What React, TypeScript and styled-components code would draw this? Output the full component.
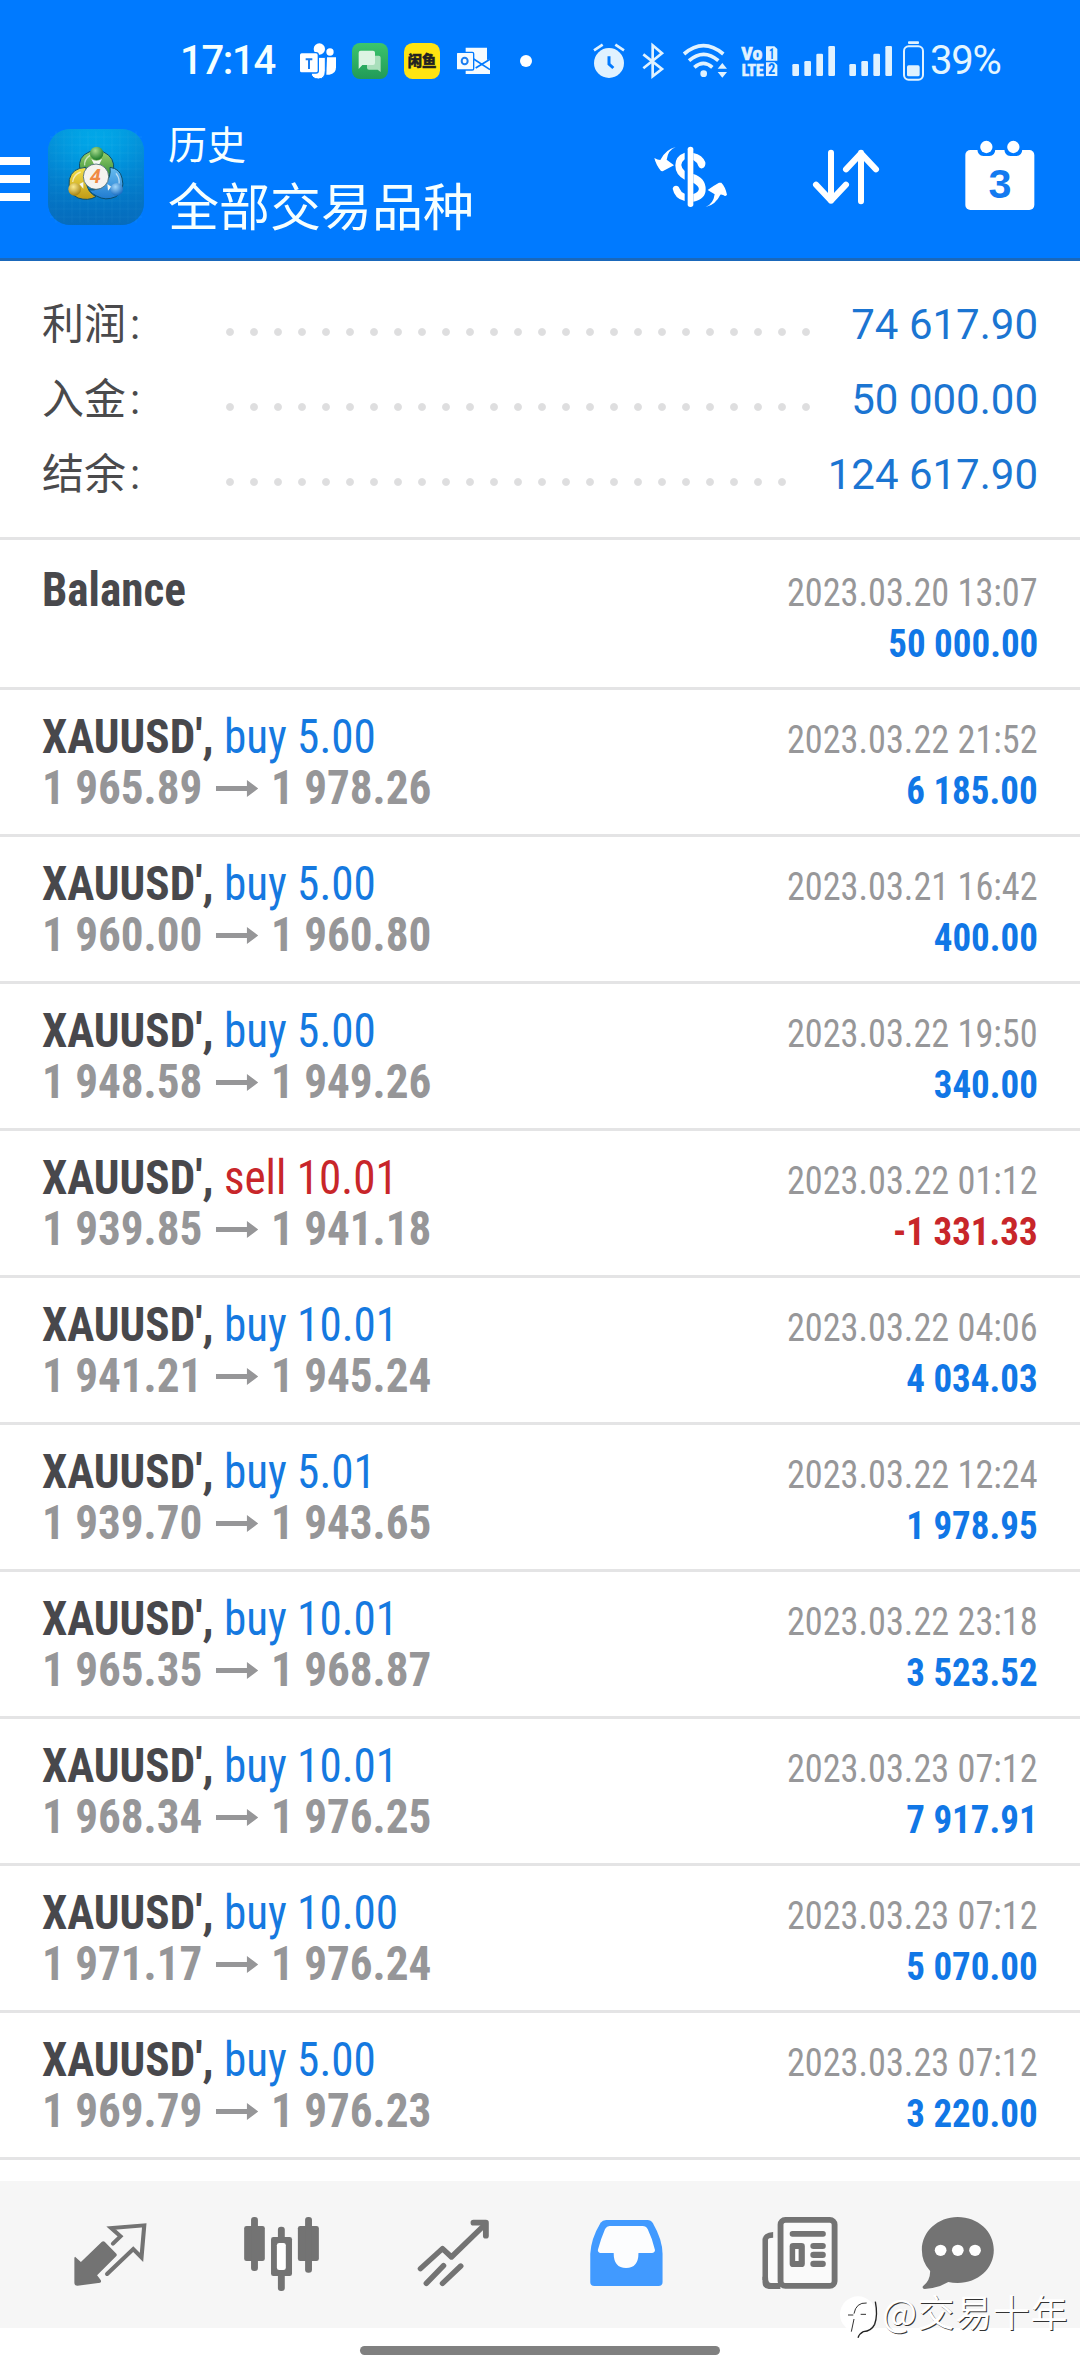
import React from "react";
import styled, { createGlobalStyle } from "styled-components";

const GlobalStyle = createGlobalStyle`
  * { box-sizing: border-box; }
  body { margin: 0; background: #fff; }
`;

const uiFont = `Roboto, "Noto Sans CJK SC", sans-serif`;
const condensedFont = `"Roboto Condensed", Roboto, "Noto Sans CJK SC", sans-serif`;

const Screen = styled.div`
  position: relative;
  width: 1080px;
  height: 2376px;
  display: flex;
  flex-direction: column;
  overflow: hidden;
  background: #fff;
  font-family: ${uiFont};
`;

const TopArea = styled.header`
  height: 261px;
  background: #007aff;
  border-bottom: 3px solid #1a68bb;
`;

const StatusBar = styled.div`
  height: 122px;
  display: flex;
  align-items: center;
  padding-left: 180px;
  color: #e4f6ff;
`;

const Clock = styled.div`
  flex: none;
  width: 120px;
  font-size: 40px;
  line-height: 46px;
  font-weight: 500;
  letter-spacing: -1.3px;
  color: #f4ffff;
`;

const Notifications = styled.div`
  flex: none;
  display: flex;
  align-items: center;
  gap: 16px;
`;

const MoreDot = styled.span`
  width: 12px;
  height: 12px;
  margin-left: 12px;
  border-radius: 50%;
  background: #fff;
`;

const SystemIcons = styled.div`
  flex: none;
  display: flex;
  align-items: center;
  margin-left: 61px;
`;

const StatusIcon = styled.svg<{ $w: number; $gap?: number }>`
  display: block;
  flex: none;
  width: ${(p) => p.$w}px;
  height: 40px;
  margin-left: ${(p) => p.$gap ?? 0}px;
`;

const NoteIcon = styled.svg`
  display: block;
  width: 36px;
  height: 36px;
`;

const BatteryText = styled.div`
  margin-left: 6px;
  font-size: 40px;
  line-height: 46px;
  letter-spacing: -1.2px;
  white-space: nowrap;
`;

const AppBar = styled.div`
  height: 136px;
  display: flex;
  align-items: flex-start;
`;

const MenuButton = styled.div`
  width: 30px;
  margin-top: 35px;
  display: flex;
  flex-direction: column;
  gap: 10px;
`;

const MenuLine = styled.span`
  height: 8px;
  background: #fff;
`;

const AppIcon = styled.svg`
  width: 96px;
  height: 96px;
  margin: 7px 0 0 18px;
`;

const Titles = styled.div`
  width: 486px;
  margin: -3px 0 0 24px;
  color: #f6ffff;
  font-family: "Noto Sans CJK SC", sans-serif;
`;

const Subtitle = styled.div`
  font-size: 39px;
  line-height: 46px;
`;

const Title = styled.div`
  font-size: 51px;
  line-height: 60px;
  margin-top: 9px;
`;

const ActionIcon = styled.svg<{ $w: number; $gap?: number }>`
  flex: none;
  width: ${(p) => p.$w}px;
  height: 72px;
  margin: 18px 0 0 ${(p) => p.$gap ?? 0}px;
`;

const Summary = styled.section`
  height: 279px;
  padding: 26px 42px 0 42px;
  border-bottom: 3px solid #e4e4e5;
`;

const SummaryRow = styled.div`
  height: 75px;
  display: flex;
  align-items: center;
`;

const SummaryLabel = styled.div`
  width: 176px;
  font-size: 42px;
  line-height: 60px;
  color: #4a4a4c;
`;

const Colon = styled.span`
  margin-left: 4px;
`;

const Leader = styled.div<{ $dots: number }>`
  width: ${(p) => p.$dots * 24}px;
  height: 24px;
  margin-top: 15px;
  background-image: radial-gradient(circle at center, #dededf 3.4px, rgba(222, 222, 223, 0) 4.4px);
  background-size: 24px 24px;
`;

const SummaryValue = styled.div`
  margin-left: auto;
  font-size: 42px;
  line-height: 60px;
  color: #1b75d2;
`;

const DealRow = styled.div<{ $tall?: boolean }>`
  height: ${(p) => (p.$tall ? 150 : 147)}px;
  padding: ${(p) => (p.$tall ? 24 : 21)}px 42px 0 42px;
  display: flex;
  justify-content: space-between;
  border-bottom: 3px solid #e4e4e5;
  font-family: ${condensedFont};
`;

const DealLeft = styled.div`
  display: flex;
  flex-direction: column;
  transform: scaleX(0.94);
  transform-origin: left center;
`;

const DealRight = styled.div`
  display: flex;
  flex-direction: column;
  align-items: flex-end;
  padding-top: 4px;
`;

const Instrument = styled.div`
  font-size: 48px;
  line-height: 51px;
  white-space: pre;
  color: #48484c;
`;

const Symbol = styled.b`
  font-weight: 700;
`;

const Side = styled.span<{ $sell?: boolean }>`
  color: ${(p) => (p.$sell ? "#c8262a" : "#1579e0")};
`;

const Prices = styled.div`
  display: flex;
  align-items: center;
  font-size: 48px;
  line-height: 51px;
  font-weight: 700;
  color: #969698;
`;

const Arrow = styled.svg`
  width: 45px;
  height: 17px;
  margin: 2px 14px 0 14px;
`;

const Time = styled.div`
  font-size: 39px;
  line-height: 51px;
  color: #979799;
  transform: scaleX(0.93);
  transform-origin: right center;
`;

const Profit = styled.div<{ $loss?: boolean }>`
  font-size: 39px;
  line-height: 51px;
  font-weight: 700;
  color: ${(p) => (p.$loss ? "#c8262a" : "#1177e6")};
  transform: scaleX(0.948);
  transform-origin: right center;
`;

const Nav = styled.nav`
  height: 147px;
  margin-top: 21px;
  padding-left: 24px;
  display: grid;
  grid-template-columns: 172px 170px 174px 172px 176px 140px;
  place-items: center;
  background: #f6f6f6;
`;

const NavIcon = styled.svg`
  display: block;
  width: 84px;
  height: 83px;
`;

const HomeBar = styled.div`
  width: 360px;
  height: 9px;
  margin: 18px auto 0;
  border-radius: 5px;
  background: #808080;
`;

const Watermark = styled.div`
  position: absolute;
  left: 838px;
  top: 2287px;
  display: flex;
  align-items: center;
  font-family: "Noto Sans CJK SC", sans-serif;
  font-size: 37px;
  line-height: 48px;
  letter-spacing: 0.6px;
  color: #fff;
  text-shadow: 1px 1px 0 #333;
`;

const WatermarkLogo = styled.svg`
  width: 44px;
  height: 48px;
  overflow: visible;
`;

type Deal = { side: "buy" | "sell"; lots: string; open: string; close: string; time: string; profit: string };

const summary = [
  { label: "利润", dots: 25, value: "74 617.90" },
  { label: "入金", dots: 25, value: "50 000.00" },
  { label: "结余", dots: 24, value: "124 617.90" },
];

const deals: Deal[] = [
  { side: "buy", lots: "5.00", open: "1 965.89", close: "1 978.26", time: "2023.03.22 21:52", profit: "6 185.00" },
  { side: "buy", lots: "5.00", open: "1 960.00", close: "1 960.80", time: "2023.03.21 16:42", profit: "400.00" },
  { side: "buy", lots: "5.00", open: "1 948.58", close: "1 949.26", time: "2023.03.22 19:50", profit: "340.00" },
  { side: "sell", lots: "10.01", open: "1 939.85", close: "1 941.18", time: "2023.03.22 01:12", profit: "-1 331.33" },
  { side: "buy", lots: "10.01", open: "1 941.21", close: "1 945.24", time: "2023.03.22 04:06", profit: "4 034.03" },
  { side: "buy", lots: "5.01", open: "1 939.70", close: "1 943.65", time: "2023.03.22 12:24", profit: "1 978.95" },
  { side: "buy", lots: "10.01", open: "1 965.35", close: "1 968.87", time: "2023.03.22 23:18", profit: "3 523.52" },
  { side: "buy", lots: "10.01", open: "1 968.34", close: "1 976.25", time: "2023.03.23 07:12", profit: "7 917.91" },
  { side: "buy", lots: "10.00", open: "1 971.17", close: "1 976.24", time: "2023.03.23 07:12", profit: "5 070.00" },
  { side: "buy", lots: "5.00", open: "1 969.79", close: "1 976.23", time: "2023.03.23 07:12", profit: "3 220.00" },
];

const ICON = "#e0f2ff";

function StatusLine() {
  return (
    <StatusBar>
      <Clock>17:14</Clock>
      <Notifications>
        <NoteIcon viewBox="419 70 108 108" fill="#fff">
          <circle cx="509" cy="97" r="11" />
          <path d="M500 113h27v30q0 20-20 22h-9z" />
          <circle cx="477" cy="88" r="17" />
          <path d="M452 113h43v40q0 25-21 25t-22-20z" stroke="#007aff" strokeWidth="3" />
          <rect x="417" y="99" width="57" height="61" rx="7" stroke="#007aff" strokeWidth="4" />
          <path d="M436 116h20v6h-7v26h-6v-26h-7z" fill="#1a7df0" />
        </NoteIcon>
        <NoteIcon viewBox="577 70 108 108">
          <defs>
            <linearGradient id="msg" x1="0" y1="0" x2="0" y2="1">
              <stop offset="0" stopColor="#3cc56c" />
              <stop offset="1" stopColor="#219a58" />
            </linearGradient>
          </defs>
          <rect x="577" y="70" width="108" height="108" rx="24" fill="url(#msg)" />
          <path d="M622 108h35q6 0 6 6v43l-9-7h-26q-6 0-6-6z" fill="#a9dfbb" />
          <path d="M603 93h37q6 0 6 6v31q0 6-6 6h-32l-11 12V99q0-6 6-6z" fill="#dcf4e3" />
        </NoteIcon>
        <NoteIcon viewBox="732 70 108 108">
          <rect x="732" y="70" width="108" height="108" rx="26" fill="#ffe411" />
          <text x="786" y="139" textAnchor="middle" fontSize="43" fontWeight="900" fontFamily="Noto Sans CJK SC, sans-serif" fill="#222" stroke="#222" strokeWidth="1.500">
            闲鱼
          </text>
        </NoteIcon>
        <NoteIcon viewBox="889 70 108 108">
          <path d="M918 84h64v34l9-2v47h-73z" fill="#f4fbff" />
          <path d="M982 84h12v32l-12 5z" fill="#007aff" />
          <path d="M942 118l49 32M991 119l-43 26" stroke="#007aff" strokeWidth="5" />
          <rect x="890" y="98" width="52" height="53" rx="4" fill="#f4fbff" stroke="#007aff" strokeWidth="4" />
          <ellipse cx="915" cy="124" rx="9" ry="10" fill="none" stroke="#1a7df0" strokeWidth="6" />
        </NoteIcon>
        <MoreDot />
      </Notifications>
      <SystemIcons>
        <StatusIcon $w={32} viewBox="99 63 96 120">
          <circle cx="147" cy="129" r="45" fill={ICON} />
          <path d="M102 91l26-17M192 91l-26-17" stroke={ICON} strokeWidth="8" />
          <path d="M147 109v23l13 12" fill="none" stroke="#007aff" strokeWidth="9" />
        </StatusIcon>
        <StatusIcon $w={23} $gap={17} viewBox="246 63 69 120" fill="none" stroke={ICON} strokeWidth="8">
          <path d="M250 103l56 44-28 22V76l28 24-56 45" />
        </StatusIcon>
        <StatusIcon $w={46} $gap={17} viewBox="366 63 138 120">
          <g fill="none" stroke={ICON} strokeWidth="11">
            <path d="M372 102q58-50 118 0M387 122q44-38 88 0M403 142q27-24 54 0" />
          </g>
          <circle cx="431" cy="161" r="10" fill={ICON} />
          <path d="M487 129l14 17h-28zM487 173l14-17h-28z" fill={ICON} />
        </StatusIcon>
        <StatusIcon $w={37} $gap={13} viewBox="543 63 111 120" fill={ICON} fontFamily="Roboto Condensed, Roboto, sans-serif" fontWeight="700">
          <g stroke={ICON} strokeWidth="2">
            <text x="544" y="120" fontSize="56" textLength="63" lengthAdjust="spacingAndGlyphs">Vo</text>
            <text x="545" y="167" fontSize="50" textLength="66" lengthAdjust="spacingAndGlyphs">LTE</text>
          </g>
          <path d="M618 79h25l9 8v35h-34zM618 127h25l9 8v33h-34z" />
          <text x="627" y="118" fontSize="44" fill="#007aff" textLength="16" lengthAdjust="spacingAndGlyphs">1</text>
          <text x="624" y="163" fontSize="42" fill="#007aff" textLength="22" lengthAdjust="spacingAndGlyphs">2</text>
        </StatusIcon>
        {[14, 13].map((gap) => (
          <StatusIcon key={gap} $w={44} $gap={gap} viewBox="696 63 132 120" fill={ICON}>
            <rect x="697" y="132" width="20" height="36" rx="4" />
            <rect x="733" y="123" width="20" height="45" rx="4" />
            <rect x="769" y="101" width="20" height="67" rx="4" />
            <rect x="805" y="78" width="20" height="90" rx="4" />
          </StatusIcon>
        ))}
        <StatusIcon $w={21} $gap={10} viewBox="1029 61 63 120">
          <rect x="1044" y="62" width="33" height="8" rx="3" fill={ICON} />
          <rect x="1032" y="77" width="57" height="100" rx="14" fill="none" stroke={ICON} strokeWidth="6" />
          <rect x="1041" y="134" width="38" height="33" rx="5" fill={ICON} />
        </StatusIcon>
        <BatteryText>39%</BatteryText>
      </SystemIcons>
    </StatusBar>
  );
}

function Logo() {
  const lines = [168, 192, 216, 240, 264, 288, 312, 336, 360, 384, 408];
  return (
    <AppIcon viewBox="144 57 288 288">
      <defs>
        <linearGradient id="bg" x1="0" y1="0" x2="0" y2="1">
          <stop offset="0" stopColor="#00b0ee" />
          <stop offset="0.5" stopColor="#0089d6" />
          <stop offset="1" stopColor="#0066b8" />
        </linearGradient>
        <radialGradient id="shade" cx="0.5" cy="0.35" r="0.7">
          <stop offset="0.3" stopColor="#0a70c0" stopOpacity="0" />
          <stop offset="1" stopColor="#0a70c0" stopOpacity="0.6" />
        </radialGradient>
        <linearGradient id="green" x1="0" y1="0" x2="0" y2="1">
          <stop offset="0" stopColor="#9dd36d" />
          <stop offset="1" stopColor="#2f8a35" />
        </linearGradient>
        <linearGradient id="gold" x1="0" y1="0" x2="0" y2="1">
          <stop offset="0" stopColor="#f5e04a" />
          <stop offset="1" stopColor="#c09a16" />
        </linearGradient>
        <linearGradient id="azure" x1="0" y1="0" x2="0" y2="1">
          <stop offset="0" stopColor="#69bdf0" />
          <stop offset="1" stopColor="#1f7bd0" />
        </linearGradient>
        <radialGradient id="ballG" cx="0.4" cy="0.3" r="0.7">
          <stop offset="0" stopColor="#a9dd8e" />
          <stop offset="1" stopColor="#1e7c2a" />
        </radialGradient>
        <radialGradient id="ballY" cx="0.4" cy="0.3" r="0.7">
          <stop offset="0" stopColor="#fbeb90" />
          <stop offset="1" stopColor="#a98412" />
        </radialGradient>
        <radialGradient id="ballB" cx="0.4" cy="0.3" r="0.7">
          <stop offset="0" stopColor="#a2d8fb" />
          <stop offset="1" stopColor="#186cc2" />
        </radialGradient>
      </defs>
      <rect x="144" y="57" width="288" height="288" rx="66" fill="url(#bg)" />
      <g stroke="#5fd0f5" strokeWidth="1.2" opacity="0.3">
        {lines.map((v) => (
          <path key={v} d={`M${v} 64V338M150 ${v - 87}H426`} />
        ))}
      </g>
      <rect x="144" y="57" width="288" height="288" rx="66" fill="url(#shade)" />
      <g stroke="#0b4e6e" strokeWidth="3">
        <path d="M239 178q-6-38 28-52q22-10 44 0q34 16 30 54q-6 20-12 24l-26-26l-30-8l-22 14z" fill="url(#green)" />
        <path d="M258 172q-42 2-50 36q-6 42 26 56q30 10 54-4q-22-12-28-36q-4-26-2-52z" fill="url(#gold)" />
        <path d="M330 172q30 4 36 32q10 38-18 56q-32 14-58-2q-14-6-24-18q34 2 50-20q18-20 14-48z" fill="url(#azure)" />
      </g>
      <path d="M254 166q-2-18 16-30M218 216q2-22 24-30M348 190q14 18 8 36" fill="none" stroke="#fff" strokeWidth="4" opacity="0.6" />
      <path d="M274 147q14 10 32 0l-8 16h-16zM238 222l12-6v20zM322 222l12 8-10 12z" fill="#f4f8f4" />
      <circle cx="290" cy="130" r="20" fill="url(#ballG)" />
      <circle cx="224" cy="238" r="19" fill="url(#ballY)" />
      <circle cx="350" cy="238" r="19" fill="url(#ballB)" />
      <circle cx="288" cy="200" r="38" fill="#f5f3ef" stroke="#476a75" strokeWidth="2.5" />
      <text x="286" y="220" textAnchor="middle" fontFamily="Roboto, sans-serif" fontSize="60" fontWeight="700" fontStyle="italic" fill="#f08a44">
        4
      </text>
    </AppIcon>
  );
}

function Header() {
  return (
    <TopArea>
      <StatusLine />
      <AppBar>
        <MenuButton>
          <MenuLine />
          <MenuLine />
          <MenuLine />
        </MenuButton>
        <Logo />
        <Titles>
          <Subtitle>历史</Subtitle>
          <Title>全部交易品种</Title>
        </Titles>
        <ActionIcon $w={74} viewBox="100 90 222 216" fill="#fff">
          <path d="M165 111q-23 9-27 38l22 17q-19 10-34 18l-5-1q-15-18-20-39 10 6 18 6 16-32 46-39z" />
          <path d="M255 291q23-9 27-38l-21-13q19-14 34-22h7q12 12 17 36-5 7-10 2-8-4-10-2-14 30-44 37z" />
          <rect x="201" y="110" width="17" height="181" rx="8" />
          <path d="M192 128v20q-20 16 0 35v26q-28-14-28-43 0-28 28-38zM156 236q2-9 10-9 8 0 11 9 4 11 15 15v22q-30-7-36-37z" />
          <path d="M218 129q28 6 36 28 2 14-9 18-8 2-12-7-4-12-15-18zM218 192q37 12 37 46 0 30-37 37v-23q33-14 0-34z" />
        </ActionIcon>
        <ActionIcon $w={70} $gap={83} viewBox="573 90 210 216" fill="none" stroke="#fff" strokeWidth="18" strokeLinecap="round" strokeLinejoin="round">
          <path d="M633 128V272M588 224l45 48 45-48M723 274V128M678 178l45-48 45 48" />
        </ActionIcon>
        <ActionIcon $w={72} $gap={83} viewBox="1034 90 216 216">
          <rect x="1038" y="120" width="207" height="180" rx="15" fill="#fff" />
          <path d="M1074 118h54q-1 20-18 20h-18q-17-1-18-20zM1155 118h54q-1 20-18 20h-18q-17-1-18-20z" fill="#007aff" />
          <circle cx="1101" cy="111" r="18.500" fill="#fff" />
          <circle cx="1182" cy="111" r="18.500" fill="#fff" />
          <text x="1142" y="263" textAnchor="middle" fontSize="124" fontWeight="700" fontFamily="Liberation Sans, sans-serif" fill="#147af0">
            3
          </text>
        </ActionIcon>
      </AppBar>
    </TopArea>
  );
}

function BottomNav() {
  const gray = "#737373";
  return (
    <Nav>
      <NavIcon viewBox="197.5 279 244 249" preserveAspectRatio="none">
        <path d="M218 410l17 16 61-61q4-3 8 0l34 36q3 4 0 7l-56 58 11 15q2 5-2 7l-66 9q-9 0-9-9v-75z" fill={gray} />
        <path d="M328 371l22-22-27-25 96-8-8 96-24-25-76 75" fill="none" stroke={gray} strokeWidth="12" strokeLinecap="round" />
      </NavIcon>
      <NavIcon viewBox="694 279 244 249" preserveAspectRatio="none" fill={gray}>
        <rect x="709" y="318" width="60" height="105" rx="7" />
        <rect x="729" y="291" width="20" height="162" rx="9" />
        <rect x="865" y="318" width="61" height="105" rx="7" />
        <rect x="886" y="291" width="20" height="167" rx="9" />
        <rect x="807" y="320" width="20" height="193" rx="9" />
        <rect x="787" y="351" width="61" height="117" rx="7" />
        <rect x="804" y="369" width="26" height="81" rx="7" fill="#fff" />
      </NavIcon>
      <NavIcon viewBox="1193.5 279 244 249" preserveAspectRatio="none" fill="none" stroke={gray} strokeWidth="16" strokeLinecap="round" strokeLinejoin="round">
        <path d="M1221 446l64-60 26 25 97-97M1238 490l50-53M1285 490l53-52" />
        <path d="M1375 308h36v39" strokeWidth="17" />
      </NavIcon>
      <NavIcon viewBox="127.8 279 244 249" preserveAspectRatio="none">
        <path d="M192 300H312Q322 300 328 310Q356 360 356 402V486Q356 498 344 498H158Q146 498 146 486V402Q148 356 176 308Q182 300 192 300Z" fill="#419aff" />
        <path d="M202 318H298Q308 318 313 328Q327 358 334 390Q334 398 325 399H286Q286 444 250 444Q214 444 214 399H176Q168 398 168 390Q176 358 189 327Q194 318 202 318Z" fill="#fcfdfe" />
      </NavIcon>
      <NavIcon viewBox="633 279 244 249" preserveAspectRatio="none">
        <path d="M663 489V360q2-7 14-7h13v136z" fill="#fafafa" />
        <path d="M646 470h16q0 19 9 19h27v18h-34q-18-2-18-20z" fill={gray} />
        <path d="M677 336v17q-15 0-15 7v120h-16V358q2-20 31-22z" fill={gray} />
        <rect x="698.500" y="299.500" width="157" height="198" rx="14" fill="#fafafa" stroke={gray} strokeWidth="17" />
        <rect x="725" y="333" width="105" height="17" rx="8" fill={gray} />
        <rect x="725" y="369" width="44" height="72" rx="10" fill={gray} />
        <rect x="741" y="387" width="10" height="36" fill="#fff" />
        <rect x="785" y="369" width="45" height="18" rx="9" fill={gray} />
        <rect x="785" y="395" width="45" height="19" rx="9" fill={gray} />
        <rect x="785" y="422" width="45" height="19" rx="9" fill={gray} />
      </NavIcon>
      <NavIcon viewBox="1092 279 244 249" preserveAspectRatio="none">
        <path d="M1213 291C1272 291 1318 334 1318 390C1318 446 1272 489 1213 489Q1198 489 1186 486Q1155 505 1117 507Q1109 506 1112 499Q1134 482 1133 453Q1109 427 1109 390C1109 334 1156 291 1213 291Z" fill={gray} />
        <g fill="#fff">
          <circle cx="1163.500" cy="391" r="17" />
          <circle cx="1213.500" cy="391" r="17" />
          <circle cx="1263.500" cy="391" r="17" />
        </g>
      </NavIcon>
    </Nav>
  );
}

export default function App() {
  return (
    <Screen>
      <GlobalStyle />
      <Header />
      <Summary>
        {summary.map((s) => (
          <SummaryRow key={s.label}>
            <SummaryLabel>
              {s.label}
              <Colon>:</Colon>
            </SummaryLabel>
            <Leader $dots={s.dots} />
            <SummaryValue>{s.value}</SummaryValue>
          </SummaryRow>
        ))}
      </Summary>
      <DealRow $tall>
        <DealLeft>
          <Instrument>
            <Symbol>Balance</Symbol>
          </Instrument>
        </DealLeft>
        <DealRight>
          <Time>2023.03.20 13:07</Time>
          <Profit>50 000.00</Profit>
        </DealRight>
      </DealRow>
      {deals.map((d, i) => (
        <DealRow key={i}>
          <DealLeft>
            <Instrument>
              <Symbol>XAUUSD', </Symbol>
              <Side $sell={d.side === "sell"}>
                {d.side} {d.lots}
              </Side>
            </Instrument>
            <Prices>
              {d.open}
              <Arrow viewBox="0 0 45 17">
                <path d="M0 6h33V0l12 8.500L33 17v-6H0z" fill="#969698" />
              </Arrow>
              {d.close}
            </Prices>
          </DealLeft>
          <DealRight>
            <Time>{d.time}</Time>
            <Profit $loss={d.profit.startsWith("-")}>{d.profit}</Profit>
          </DealRight>
        </DealRow>
      ))}
      <BottomNav />
      <HomeBar />
      <Watermark>
        <WatermarkLogo viewBox="24 24 132 144">
          <ellipse cx="84" cy="106" rx="54" ry="54" fill="#fff" />
          <path d="M54 108h16M64 158l8-38M72 104q6-34 38-32M92 106h16" fill="none" stroke="#333" strokeWidth="3" />
          <path d="M136 68q8 40-2 68-10 20-34 22-12 6-16 18" fill="none" stroke="#222" strokeWidth="4" />
        </WatermarkLogo>
        @交易十年
      </Watermark>
    </Screen>
  );
}
